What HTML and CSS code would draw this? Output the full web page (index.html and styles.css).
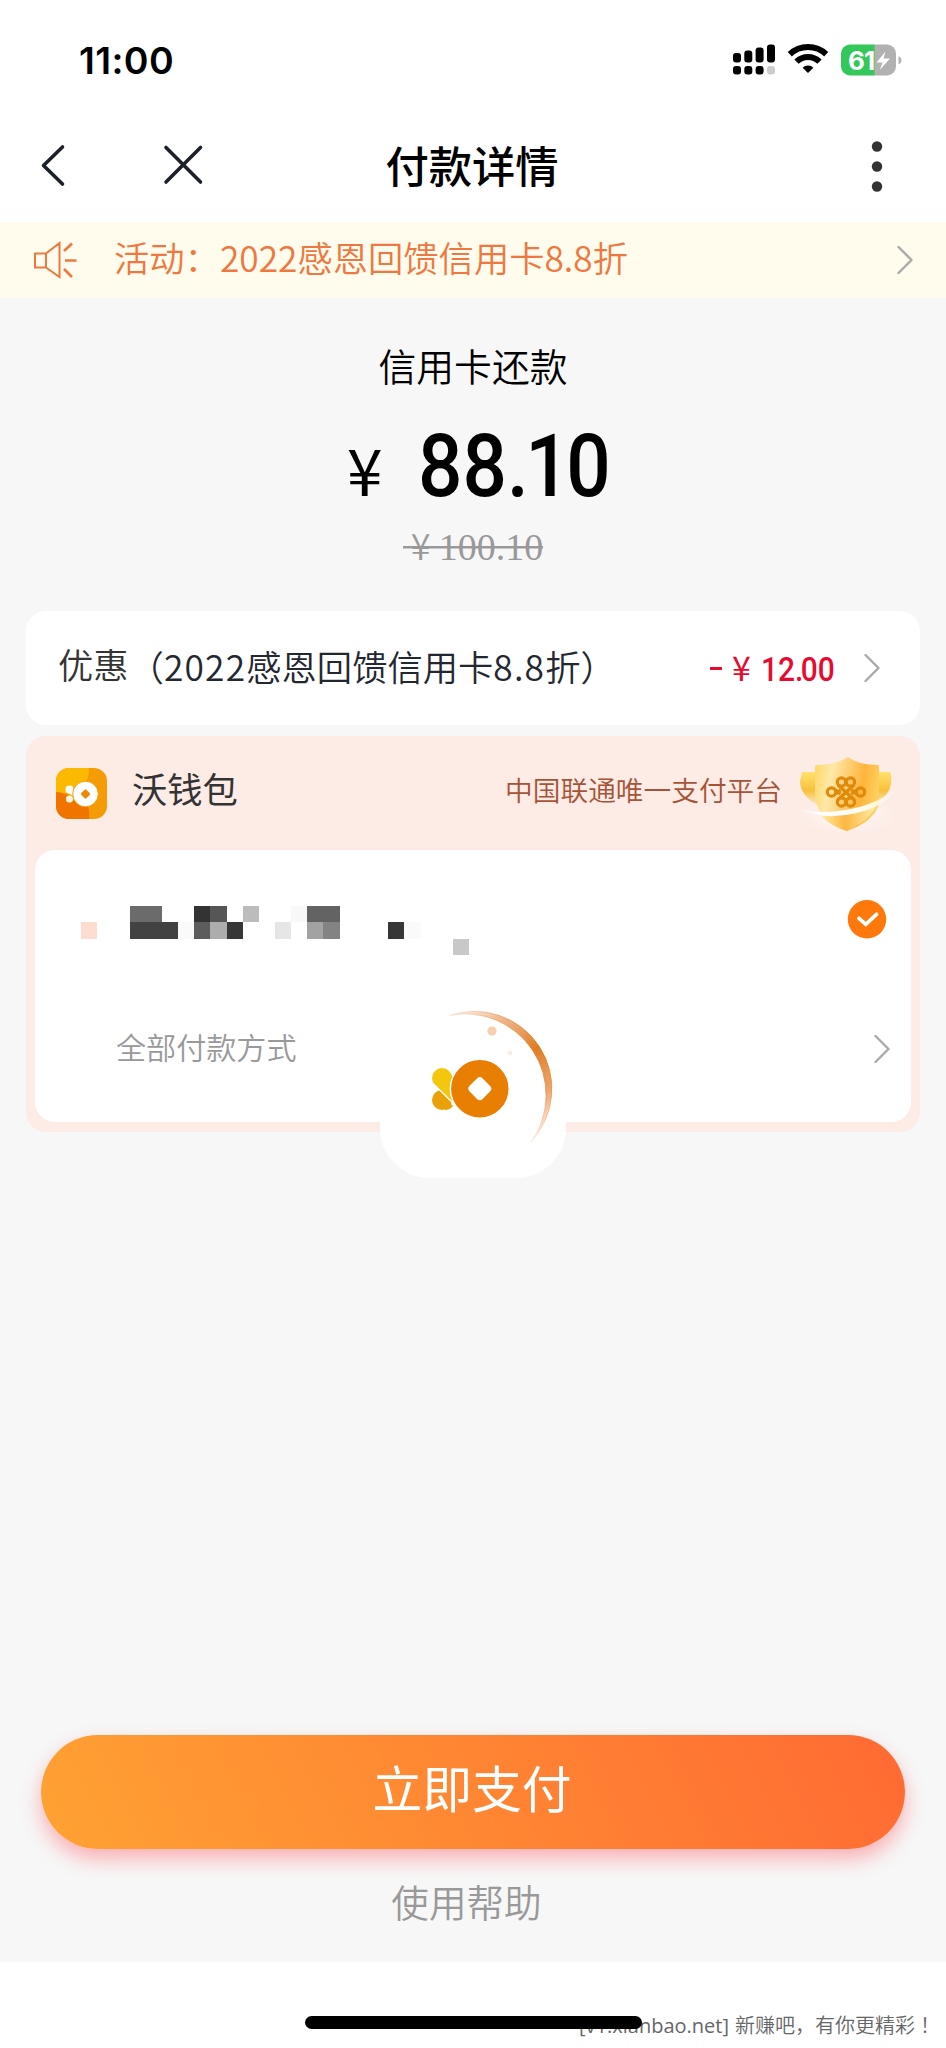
FILE: index.html
```html
<!DOCTYPE html>
<html lang="zh-CN">
<head>
<meta charset="utf-8">
<title>付款详情</title>
<link rel="stylesheet" href="styles.css">
</head>
<body>
<div class="screen">
  <header class="status">
    <span class="clock">11:00</span>
    <svg class="status-icons" width="170" height="34" viewBox="0 0 170 34">
      <g>
        <rect x="1" y="10" width="8" height="9.5" rx="3"/><rect x="12.300" y="7.500" width="8" height="12" rx="3"/><rect x="23.600" y="4.500" width="8" height="15" rx="3"/><rect x="35" y="1.500" width="8" height="18" rx="3"/>
        <rect x="1" y="23" width="8" height="8.500" rx="3"/><rect x="12.300" y="23" width="8" height="8.500" rx="3"/><rect x="23.600" y="23" width="8" height="8.500" rx="3"/><rect x="35" y="23" width="8" height="8.500" rx="3" fill="#ccc"/>
      </g>
      <g fill="none" stroke="#000" stroke-width="6">
        <path d="M57.800 11.300a26.500 26.500 0 0 1 36.400 0"/>
        <path d="M64.500 18.600a16.500 16.500 0 0 1 23 0"/>
      </g>
      <path d="M76 30 70.600 24.700a7.600 7.600 0 0 1 10.800 0z"/>
      <clipPath id="cell"><rect x="109" y="1.500" width="55" height="31" rx="9"/></clipPath>
      <g clip-path="url(#cell)"><rect x="109" y="1" width="34" height="32" fill="#34c759"/><rect x="142.500" y="1" width="22" height="32" fill="#b1b1b1"/></g>
      <path d="M166.500 13q3 1.500 3 4.200t-3 4.200z" fill="#b1b1b1"/>
      <text class="battery" x="116" y="26.500">61</text>
      <path d="M153.500 8.500 144.500 19.500h6L147.800 27l10.200-11.500h-6.500z" fill="#fff"/>
    </svg>
  </header>

  <nav class="nav">
    <svg width="175" height="52" viewBox="0 0 175 52" fill="none" stroke="#1c2029" stroke-width="3.600" stroke-linecap="round" stroke-linejoin="round">
      <path d="M23.500 7 4.500 25.500l19 18.500M127 7.500l34.500 34.500M161.500 7.500 127 42"/>
    </svg>
    <h1 class="title">付款详情</h1>
    <svg class="more" width="12" height="52" viewBox="0 0 12 52" fill="#333"><circle cx="6" cy="6.500" r="5.200"/><circle cx="6" cy="26.500" r="5.200"/><circle cx="6" cy="46.500" r="5.200"/></svg>
  </nav>

  <div class="notice">
    <svg width="44" height="38" viewBox="0 0 44 38" fill="none" stroke="#ee7840" stroke-width="2">
      <path d="M2 12.500h11v14H2zM13 12.500 26.500 2v34L13 26.500"/><path stroke-width="2.600" d="m31 10 8-7.500M32 19.500h11.500M31 28l8 8"/>
    </svg>
    <span class="notice-text">活动：2022感恩回馈信用卡8.8折</span>
    <svg width="16" height="28" viewBox="0 0 16 28" class="chev"><path d="m1.500 1 13 13-13 13"/></svg>
  </div>

  <main class="page">
    <section class="amount">
      <p class="purpose">信用卡还款</p>
      <p class="total"><span class="yen">¥</span><span class="num">88<span class="dot">.1</span>0</span></p>
      <p class="was"><span class="was-yen"> ¥ </span>100.10</p>
    </section>

    <section class="card discount">
      <span class="dlabel">优惠</span><span class="dname">（<span class="lat">2022</span>感恩回馈信用卡<span class="lat">8.8</span>折）</span>
      <span class="minus"><i class="dash"></i><span class="ryen">¥</span><span class="rnum">12<span class="rdot">.</span>00</span></span>
      <svg width="16" height="28" viewBox="0 0 16 28" class="chev"><path d="m1.500 1 13 13-13 13"/></svg>
    </section>

    <section class="card wallet">
      <div class="wallet-head">
        <svg width="51" height="51" viewBox="0 0 51 51">
          <clipPath id="tile"><rect width="51" height="51" rx="13"/></clipPath>
          <g clip-path="url(#tile)">
            <rect width="51" height="51" fill="#f59b05"/>
            <path d="M0 0h33q0 14-8 20T0 26z" fill="#fbb900"/>
            <path d="M0 24q10 0 18 8t14 7q2 5 1 12H0z" fill="#f07400"/>
          </g>
          <circle cx="13.500" cy="21.500" r="4" fill="#fff"/><circle cx="13.500" cy="31" r="3.600" fill="#fff3df"/>
          <path d="m11 24.500 6 3.500V20z" fill="#fff"/>
          <circle cx="29.500" cy="26" r="12.800" fill="#fff" stroke="#f59b05"/>
          <rect x="25.900" y="22.400" width="7.200" height="7.200" rx="1.300" transform="rotate(45 29.500 26)" fill="#f08a0a"/>
        </svg>
        <span class="wname">沃钱包</span>
        <span class="slogan">中国联通唯一支付平台</span>
        <svg class="shield" width="112" height="88" viewBox="0 0 112 88">
          <defs>
            <linearGradient id="gold" x1="0" x2="1" y1="0.200" y2="0.400"><stop offset="0" stop-color="#ffd96a"/><stop offset=".25" stop-color="#ffe8a8"/><stop offset=".75" stop-color="#ffb43c"/><stop offset="1" stop-color="#ffd060"/></linearGradient>
            <linearGradient id="base" x1="0" x2="1" y1="0" y2="0"><stop offset="0" stop-color="#fff0a8"/><stop offset=".45" stop-color="#fdb741"/><stop offset="1" stop-color="#fff0b0"/></linearGradient>
            <linearGradient id="wing" x1="0" x2="0" y1="0" y2="1"><stop offset="0" stop-color="#ffe26e"/><stop offset=".55" stop-color="#f8c03a"/><stop offset="1" stop-color="#fdebe0"/></linearGradient>
            <linearGradient id="sweep" x1="0" x2="1"><stop offset="0" stop-color="#fff" stop-opacity="0"/><stop offset=".25" stop-color="#fff"/><stop offset=".75" stop-color="#fffbe8"/><stop offset="1" stop-color="#fff" stop-opacity="0"/></linearGradient>
            <radialGradient id="glow"><stop offset="0" stop-color="#fff" stop-opacity=".6"/><stop offset="1" stop-color="#fff" stop-opacity="0"/></radialGradient>
          </defs>
          <ellipse cx="55" cy="66" rx="55" ry="20" fill="url(#glow)"/>
          <path d="M9 23h16v34Q7 46 7 32zM82 23h15q2 2 1 12-2 12-16 20z" fill="url(#wing)"/>
          <path d="M55 8q10 8 30 8 1 0 1 2v36q-4 18-32 28-24-8-30-26-2-4-2-10V18q0-2 2-2 19 0 31-8z" fill="url(#gold)"/>
          <path d="M26 64q28 3 58-9-6 16-30 27-19-6-28-18z" fill="url(#base)"/>
          <g fill="none" stroke="#e08a0a" stroke-width="3.200">
            <circle cx="48.500" cy="33" r="4.200"/><circle cx="57.500" cy="33" r="4.200"/>
            <circle cx="48.500" cy="53" r="4.200"/><circle cx="57.500" cy="53" r="4.200"/>
            <circle cx="38.500" cy="43" r="4.200"/><circle cx="67.500" cy="43" r="4.200"/>
            <path d="m45 36 16.500 15M61 36 44.500 51M42.500 41l5 4m-5 0 5-4m16 0-5 4m5 0-5-4"/>
          </g>
          <path d="M4 60Q28 66 58 60T106 36Q96 56 64 64T4 60z" fill="url(#sweep)"/>
        </svg>
      </div>
      <div class="methods">
        <div class="method">
          <svg class="mosaic" width="388" height="49" viewBox="0 0 24 3" preserveAspectRatio="none" shape-rendering="crispEdges">
            <path fill="#fddcd1" d="M0 1h1v1H0z"/>
            <path fill="#6b6b6b" d="M3 0h2v1H3z"/><path fill="#424242" d="M3 1h3v1H3z"/>
            <path fill="#fafafa" d="M6 1h1v1H6zM20 1h1v1h-1z"/>
            <path fill="#333" d="M7 0h1v1H7z"/><path fill="#565656" d="M8 0h1v1H8z"/>
            <path fill="#5c5c5c" d="M7 1h1v1H7z"/><path fill="#adadad" d="M8 1h1v1H8z"/>
            <path fill="#373737" d="M9 1h1v1H9zM19 1h1v1h-1z"/>
            <path fill="#bcbcbc" d="M10 0h1v1h-1z"/><path fill="#e6e6e6" d="M12 1h1v1h-1z"/>
            <path fill="#f8f8f8" d="M13 0h1v1h-1z"/><path fill="#636363" d="M14 0h2v1h-2z"/>
            <path fill="#a2a2a2" d="M14 1h1v1h-1z"/><path fill="#838383" d="M15 1h1v1h-1z"/>
            <path fill="#c8c8c8" d="M23 2h1v1h-1z"/>
          </svg>
          <svg width="40" height="40" viewBox="0 0 40 40"><circle cx="20" cy="20.300" r="19.200" fill="#fe780b"/><path d="m12 19.300 6.800 6L29.500 15.300" fill="none" stroke="#fff" stroke-width="3.800" stroke-linecap="round"/></svg>
        </div>
        <div class="all">
          <span class="all-text">全部付款方式</span>
          <svg width="16" height="28" viewBox="0 0 16 28" class="chev"><path d="m1.500 1 13 13-13 13"/></svg>
        </div>
      </div>
      <div class="loader">
        <svg width="186" height="186" viewBox="380 992 186 186">
          <defs><linearGradient id="arc" gradientUnits="userSpaceOnUse" x1="449" y1="1015" x2="531" y2="1141"><stop offset="0" stop-color="#e88c46" stop-opacity=".1"/><stop offset=".22" stop-color="#e68f4a" stop-opacity=".65"/><stop offset=".5" stop-color="#df7d22"/><stop offset=".78" stop-color="#e68f4a" stop-opacity=".8"/><stop offset="1" stop-color="#e88c46" stop-opacity=".1"/></linearGradient></defs>
          <path d="M449 1015.500A77.700 77.700 0 0 1 531 1142 81 81 0 0 0 449 1015.500z" fill="url(#arc)" stroke="url(#arc)"/>
          <circle cx="492" cy="1031" r="4.600" fill="#f5cfb0"/><circle cx="510" cy="1053" r="2.200" fill="#fcebe0"/>
          <circle cx="442" cy="1100" r="10" fill="#eaa008"/><path d="M437 1091 453 1106q-3 4-8 4z" fill="#eaa008"/>
          <circle cx="442" cy="1078" r="10" fill="#f3c70d"/><path d="M434.500 1084.500 453 1102V1077l-4-5z" fill="#f3c70d"/>
          <path d="M434 1084.500 454 1104" stroke="#fff" stroke-width="1.400"/>
          <circle cx="479.800" cy="1088.700" r="29.400" fill="#e97f02" stroke="#fff" stroke-width="1.400"/>
          <rect x="470.600" y="1079.500" width="18.400" height="18.400" rx="4" transform="rotate(45 479.800 1088.700)" fill="#fff"/>
        </svg>
      </div>
    </section>

    <footer class="actions">
      <button class="pay">立即支付</button>
      <a class="help">使用帮助</a>
    </footer>
  </main>

  <div class="bottom">
    <span class="mark"><span class="mark-lat">[v1.xianbao.net]</span>新赚吧<span class="punct">，</span>有你更精彩<span class="punct" lang="zh-TW">！</span></span>
    <i class="homebar"></i>
  </div>
</div>
</body>
</html>
```

FILE: styles.css
```css
* { box-sizing: border-box; margin: 0; padding: 0; }
body { font-family: "Noto Sans CJK SC", sans-serif; background: #fff; color: #000; }
i { font-style: normal; display: block; }
svg { display: block; flex: none; }
span, p, a { white-space: nowrap; }
.screen { width: 946px; height: 2048px; display: flex; flex-direction: column; overflow: hidden; }

.status { height: 120px; padding: 0 44px 0 79px; display: flex; justify-content: space-between; align-items: center; }
.clock { font: 600 37.5px/44px Inter, sans-serif; letter-spacing: 0.4px; padding-top: 1px; }
.battery { font: 700 26px Inter, sans-serif; fill: #fff; letter-spacing: -1px; }

.nav { height: 102px; padding: 20px 63px 0 39px; display: flex; align-items: flex-start; }
.title { width: 516px; text-align: center; font-size: 43.3px; font-weight: 500; line-height: 48px; flex: none; }
.more { margin-left: auto; }

.notice { height: 76px; padding: 0 33px; background: #fffced; display: flex; align-items: center; }
.notice-text { margin-left: 37px; font-size: 35.3px; line-height: 50px; font-weight: 350; color: #ee7840; flex: 1; padding-bottom: 7px; }
.chev { fill: none; stroke: #aaa; stroke-width: 2.4; stroke-linecap: round; stroke-linejoin: round; }

.page { height: 1664px; background: #f7f7f7; padding: 0 26px; display: flex; flex-direction: column; }
.amount { height: 313px; display: flex; flex-direction: column; align-items: center; }
.purpose { margin-top: 40px; font-size: 37.8px; line-height: 54px; font-weight: 350; }
.total { margin-top: 24px; width: 262px; height: 100px; display: flex; align-items: baseline; line-height: 100px; }
.yen { font-size: 64px; width: 71px; margin-left: 5px; flex: none; }
.num { font: 500 88px/100px Roboto, sans-serif; transform: scaleX(.89); transform-origin: 0 0; flex: none; }
.dot { letter-spacing: -4px; }
.was { margin-top: 8px; font: 38px/44px "Liberation Serif", "Noto Sans CJK SC", serif; color: #999; background: linear-gradient(#999, #999) 0 22px / 100% 2.5px no-repeat; }
.was-yen { font-family: "Noto Sans CJK SC", sans-serif; font-size: 36px; line-height: 40px; font-weight: 350; white-space: pre; }

.card { border-radius: 20px; flex: none; }
.discount { height: 114px; background: #fff; padding: 0 40px 0 32px; display: flex; align-items: center; }
.dlabel { font-size: 35.3px; line-height: 50px; font-weight: 350; color: #333; padding-bottom: 9px; }
.dname { font-size: 35.3px; line-height: 50px; color: #23272f; font-weight: 350; margin-left: 0; padding-bottom: 5px; }
.lat { letter-spacing: 1.2px; }
.minus { margin-left: auto; color: #e60b31; display: flex; align-items: baseline; width: 154px; }
.dash { width: 12px; height: 3px; background: #e60b31; align-self: center; }
.ryen { font-size: 34px; line-height: 50px; margin-left: 10px; width: 29px; flex: none; }
.rnum { font: 500 34px/50px Roboto, sans-serif; transform: scaleX(.88); transform-origin: 0 0; }
.rdot { letter-spacing: -3px; }

.wallet { position: relative; margin-top: 11px; height: 396px; background: #fdebe5; padding: 0 9px 10px; display: flex; flex-direction: column; }
.wallet-head { height: 114px; padding: 0 6px 0 21px; display: flex; align-items: center; }
.wname { margin-left: 25px; font-size: 35.3px; line-height: 50px; color: #333; padding-bottom: 10px; }
.slogan { margin-left: auto; font-size: 27.7px; line-height: 40px; color: #a65338; font-weight: 350; padding-bottom: 9px; }
.shield { margin-left: 11px; }
.methods { flex: 1; background: #fff; border-radius: 20px; }
.method { display: flex; justify-content: space-between; align-items: flex-start; padding: 49px 24px 0 45.600px; height: 150px; }
.mosaic { margin-top: 7px; }
.all { display: flex; justify-content: space-between; align-items: center; padding: 2px 21px 0 81px; height: 96px; }
.all-text { font-size: 30.1px; line-height: 44px; font-weight: 350; color: #999; padding-bottom: 6px; }
.loader { position: absolute; left: 354px; top: 256px; width: 186px; height: 186px; border-radius: 50px; background: #fff; }

.actions { margin-top: auto; padding: 0 15px; height: 227px; display: flex; flex-direction: column; align-items: center; }
.pay { width: 864px; height: 114px; border: 0; border-radius: 57px; padding: 0 2px 13px 0; background: linear-gradient(63deg, #ffa233, #ff6a33); box-shadow: 0 10px 20px rgba(255, 60, 70, .38); color: #fff; font: 400 49.800px/70px "Noto Sans CJK SC", sans-serif; flex: none; }
.help { margin-top: 25px; font-size: 37.6px; line-height: 54px; font-weight: 350; color: #999; padding-right: 13px; }

.bottom { position: relative; flex: 1; padding: 48px 11px 0 0; text-align: right; }
.mark { display: inline-block; font-size: 20px; line-height: 30px; color: #666; font-weight: 350; }
.mark-lat { font-family: "Open Sans", sans-serif; font-size: 20px; font-weight: 400; margin-right: 6px; }
.punct { font-family: "Noto Sans CJK TC", sans-serif; }
.homebar { position: absolute; left: 305px; top: 54px; width: 337px; height: 12.500px; border-radius: 7px; background: #000; }
```
